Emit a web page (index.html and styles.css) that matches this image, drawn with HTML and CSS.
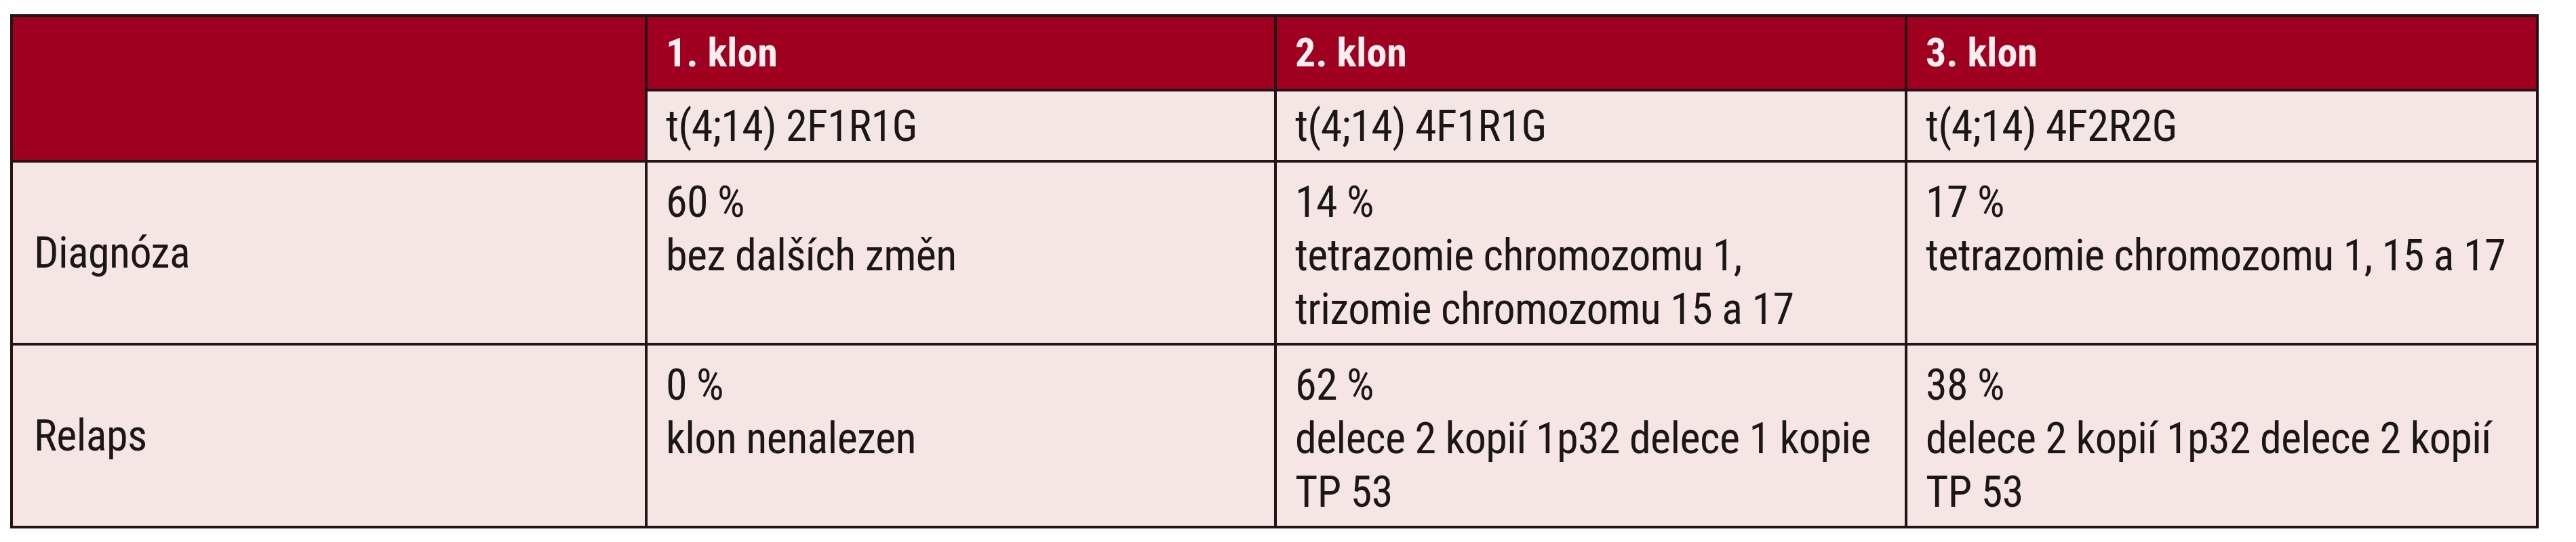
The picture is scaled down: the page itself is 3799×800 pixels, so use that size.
FILE: index.html
```html
<!DOCTYPE html>
<html lang="cs">
<head>
<meta charset="utf-8">
<title>Klony</title>
<link rel="stylesheet" href="styles.css">
</head>
<body>
<div class="grid">
  <div class="cell corner"></div>
  <div class="cell head">1. klon</div>
  <div class="cell head">2. klon</div>
  <div class="cell head">3. klon</div>
  <div class="cell sub">t(4;14) 2F1R1G</div>
  <div class="cell sub">t(4;14) 4F1R1G</div>
  <div class="cell sub">t(4;14) 4F2R2G</div>

  <div class="cell label">Diagnóza</div>
  <div class="cell body">60 %<br>bez dalších změn</div>
  <div class="cell body">14 %<br>tetrazomie chromozomu 1,<br>trizomie chromozomu 15 a 17</div>
  <div class="cell body">17 %<br>tetrazomie chromozomu 1, 15 a 17</div>

  <div class="cell label">Relaps</div>
  <div class="cell body">0 %<br>klon nenalezen</div>
  <div class="cell body">62 %<br>delece 2 kopií 1p32 delece 1 kopie<br>TP 53</div>
  <div class="cell body">38 %<br>delece 2 kopií 1p32 delece 2 kopií<br>TP 53</div>
</div>
</body>
</html>
```
FILE: styles.css
```css
html, body {
  margin: 0;
  padding: 0;
  background: #ffffff;
}

body {
  font-family: "Roboto Condensed", Roboto, "Liberation Sans", sans-serif;
  font-stretch: condensed;
  color: #1b1718;
}

.grid {
  display: grid;
  grid-template-columns: 936px 928px 930px 931px;
  grid-template-rows: 110px 105px 270px 270px;
  width: max-content;
  margin: 21px 0 0 15px;
  border-top: 4px solid #241416;
  border-left: 4px solid #241416;
}

.cell {
  box-sizing: border-box;
  border-right: 4px solid #241416;
  border-bottom: 4px solid #241416;
  background: #f5e6e5;
  font-size: 64px;
  letter-spacing: -0.6px;
  line-height: 79px;
  padding-left: 27px;
  white-space: nowrap;
}

.corner {
  grid-row: span 2;
  background: #a00020;
}

.head {
  background: #a00020;
  color: #fbeef0;
  font-weight: bold;
  font-size: 60px;
  letter-spacing: 0;
  display: flex;
  align-items: center;
  padding-bottom: 2px;
}

.sub {
  display: flex;
  align-items: center;
  background: #f4e6e5;
  padding-top: 2px;
}

.label {
  display: flex;
  align-items: center;
  padding-left: 31px;
}

.body {
  padding-top: 19px;
}
```
